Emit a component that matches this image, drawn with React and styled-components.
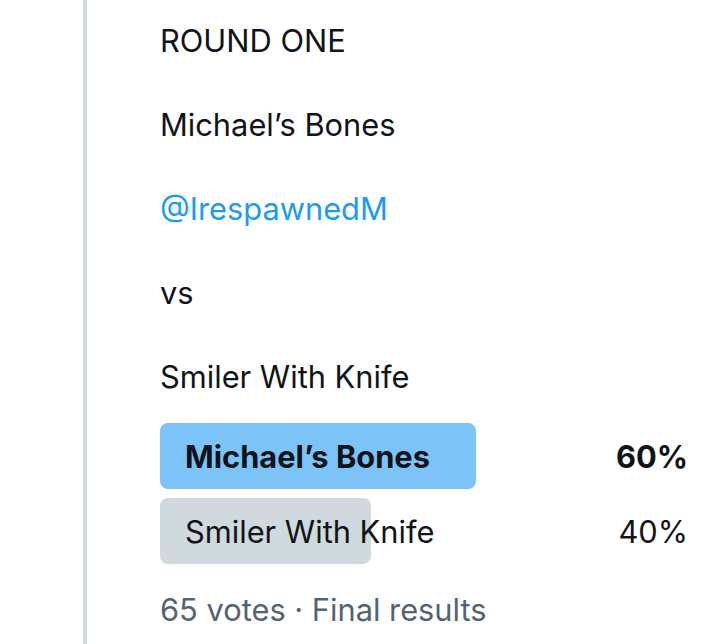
import React from "react";
import styled, { createGlobalStyle } from "styled-components";

const Global = createGlobalStyle`
  html, body { margin: 0; padding: 0; background: #fff; }
  body {
    font-family: Inter, "Noto Sans", sans-serif;
    color: #0f1419;
  }
`;

const Page = styled.div`
  display: flex;
  height: 644px;
  overflow: hidden;
`;

const Gutter = styled.div`
  width: 160px;
  flex-shrink: 0;
  display: flex;
  justify-content: flex-start;
  padding-left: 83px;
  box-sizing: border-box;
  &::before {
    content: "";
    width: 4px;
    height: 100%;
    background: #cfd9de;
  }
`;

const Body = styled.div`
  width: 527px;
  padding-top: 20px;
`;

const Text = styled.div`
  font-size: 30.8px;
  line-height: 42px;
  white-space: pre-wrap;
`;

const Link = styled.span`
  color: #1d9bf0;
`;

const Poll = styled.div`
  margin-top: 25px;
  display: flex;
  flex-direction: column;
  gap: 9px;
`;

const Choice = styled.div`
  position: relative;
  height: 66px;
  display: flex;
  align-items: center;
  justify-content: space-between;
  font-size: 30.8px;
  font-weight: ${(p) => (p.$win ? 700 : 400)};
`;

const Fill = styled.div`
  position: absolute;
  left: 0;
  top: 0;
  bottom: 0;
  border-radius: 8px;
  background: ${(p) => (p.$win ? "#7cc4f7" : "#cfd9de")};
`;

const Label = styled.span`
  position: relative;
  padding-left: 25px;
`;

const Pct = styled.span`
  position: relative;
  margin-right: -1px;
`;

const Footer = styled.div`
  margin-top: 25px;
  font-size: 30.8px;
  line-height: 42px;
  color: #536471;
`;

const choices = [
  { label: "Michael’s Bones", pct: 60, win: true },
  { label: "Smiler With Knife", pct: 40, win: false },
];

export default function App() {
  return (
    <Page>
      <Global />
      <Gutter />
      <Body>
        <Text>
          {"ROUND ONE\n\nMichael’s Bones\n\n"}
          <Link>@IrespawnedM</Link>
          {"\n\nvs\n\nSmiler With Knife"}
        </Text>
        <Poll>
          {choices.map((c) => (
            <Choice key={c.label} $win={c.win}>
              <Fill $win={c.win} style={{ width: `${c.pct}%` }} />
              <Label>{c.label}</Label>
              <Pct>{c.pct}%</Pct>
            </Choice>
          ))}
        </Poll>
        <Footer>65 votes · Final results</Footer>
      </Body>
    </Page>
  );
}
